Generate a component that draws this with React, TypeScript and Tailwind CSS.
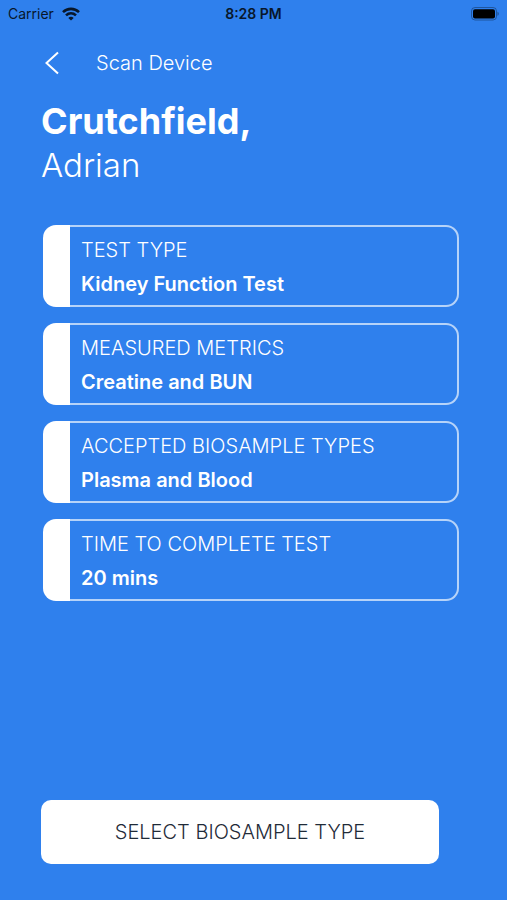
const details = [
  { label: "TEST TYPE", value: "Kidney Function Test" },
  { label: "MEASURED METRICS", value: "Creatine and BUN" },
  { label: "ACCEPTED BIOSAMPLE TYPES", value: "Plasma and Blood" },
  { label: "TIME TO COMPLETE TEST", value: "20 mins" },
];

function StatusBar() {
  return (
    <header className="grid h-7 grid-cols-3 items-center px-2 text-[14px] leading-5 text-[#08172b]">
      <div className="flex items-center gap-2">
        <span>Carrier</span>
        <svg className="h-[14px] w-[18px]" viewBox="0 0 18 14" fill="none" stroke="currentColor" strokeWidth="2.6" aria-label="Wi-Fi">
          <path d="M1 5.100C5.500.800 12.500.800 17 5.100" />
          <path d="M4 8.400c2.900-2.700 7.100-2.700 10 0" />
          <path d="M6.300 10.900c1.600-1.400 3.800-1.400 5.400 0L9 13.600z" fill="currentColor" stroke="none" />
        </svg>
      </div>
      <span className="text-center font-semibold">8:28 PM</span>
      <svg className="h-[14px] w-[30px] justify-self-end" viewBox="0 0 30 14" aria-label="Battery">
        <rect x="2.500" y=".5" width="25" height="12.500" rx="3.500" fill="none" stroke="currentColor" strokeOpacity=".4" />
        <rect x="4" y="2.200" width="22" height="9.200" rx="2" fill="#000" />
        <path d="M28.500 4.800v4c1.600-.8 1.600-3.200 0-4z" fill="currentColor" fillOpacity=".5" />
      </svg>
    </header>
  );
}

export default function App() {
  return (
    <div className="flex min-h-screen flex-col bg-[#2f80ed] font-['Inter','Liberation_Sans',sans-serif] text-white">
      <StatusBar />
      <main className="flex flex-1 flex-col pt-[19px] pr-12 pb-9 pl-[41px]">
        <nav className="flex h-8 items-center gap-[34px]">
          <button type="button" aria-label="Back" className="flex h-8 w-[21px] items-center justify-center">
            <svg className="h-6 w-4" viewBox="0 0 16 24" fill="none" stroke="currentColor" strokeWidth="2">
              <path d="M14 1.500 2.500 12 14 22.500" />
            </svg>
          </button>
          <span className="text-[20px] leading-6 font-light">Scan Device</span>
        </nav>
        <h1 className="mt-5 text-[36px] leading-[44px]">
          <span className="block font-bold">Crutchfield,</span>
          <span className="block text-[33px] font-light">Adrian</span>
        </h1>
        <dl className="mt-[38px] ml-0.5 flex flex-col gap-4">
          {details.map((item) => (
            <div
              key={item.label}
              className="flex h-[82px] flex-col justify-center gap-1 rounded-[13px] border-2 border-white/65 bg-linear-to-r from-white from-[27px] to-transparent to-[27px] bg-origin-border pt-0.5 pl-9"
            >
              <dt className="text-[20px] leading-[30px] font-light">{item.label}</dt>
              <dd className="text-[20px] leading-[30px] font-semibold">{item.value}</dd>
            </div>
          ))}
        </dl>
        <button type="button" className="mt-auto mr-5 h-16 rounded-[10px] bg-white text-[20px] font-light text-[#1f2b38]">
          SELECT BIOSAMPLE TYPE
        </button>
      </main>
    </div>
  );
}
